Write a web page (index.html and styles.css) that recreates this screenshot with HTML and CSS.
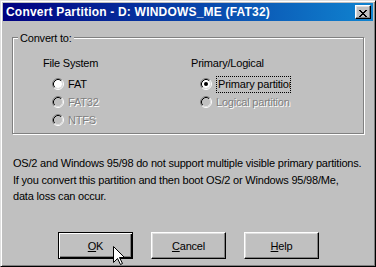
FILE: index.html
```html
<!DOCTYPE html>
<html>
<head>
<meta charset="utf-8">
<title>Convert Partition</title>
<link rel="stylesheet" href="styles.css">
</head>
<body>
<div class="window">
  <div class="titlebar">
    <span class="title">Convert Partition - D: WINDOWS_ME (FAT32)</span>
    <button class="close" aria-label="Close">
      <svg width="8" height="7" viewBox="0 0 8 7" shape-rendering="crispEdges">
        <rect x="0" y="0" width="2" height="1"/><rect x="6" y="0" width="2" height="1"/>
        <rect x="1" y="1" width="2" height="1"/><rect x="5" y="1" width="2" height="1"/>
        <rect x="2" y="2" width="4" height="1"/>
        <rect x="3" y="3" width="2" height="1"/>
        <rect x="2" y="4" width="4" height="1"/>
        <rect x="1" y="5" width="2" height="1"/><rect x="5" y="5" width="2" height="1"/>
        <rect x="0" y="6" width="2" height="1"/><rect x="6" y="6" width="2" height="1"/>
      </svg>
    </button>
  </div>
  <div class="content">
    <div class="group">
      <div class="legend">Convert to:</div>
      <div class="cols">
        <div class="col">
          <div class="heading">File System</div>
          <div class="radio">
            <svg class="rb" width="12" height="12" viewBox="0 0 12 12">
              <path d="M2.11 9.89A5.5 5.5 0 0 1 9.89 2.11" stroke="#808080" fill="none"/>
              <path d="M9.89 2.11A5.5 5.5 0 0 1 2.11 9.89" stroke="#fff" fill="none"/>
              <circle cx="6" cy="6" r="4" fill="#fff"/>
              <path d="M2.82 9.18A4.5 4.5 0 0 1 9.18 2.82" stroke="#000" fill="none"/>
              <path d="M9.18 2.82A4.5 4.5 0 0 1 2.82 9.18" stroke="#dfdfdf" fill="none"/>
            </svg>
            <span class="lbl">FAT</span>
          </div>
          <div class="radio">
            <svg class="rb" width="12" height="12" viewBox="0 0 12 12">
              <path d="M2.11 9.89A5.5 5.5 0 0 1 9.89 2.11" stroke="#808080" fill="none"/>
              <path d="M9.89 2.11A5.5 5.5 0 0 1 2.11 9.89" stroke="#fff" fill="none"/>
              <circle cx="6" cy="6" r="4" fill="#c0c0c0"/>
              <path d="M2.82 9.18A4.5 4.5 0 0 1 9.18 2.82" stroke="#000" fill="none"/>
              <path d="M9.18 2.82A4.5 4.5 0 0 1 2.82 9.18" stroke="#dfdfdf" fill="none"/>
            </svg>
            <span class="lbl disabled">FAT32</span>
          </div>
          <div class="radio">
            <svg class="rb" width="12" height="12" viewBox="0 0 12 12">
              <path d="M2.11 9.89A5.5 5.5 0 0 1 9.89 2.11" stroke="#808080" fill="none"/>
              <path d="M9.89 2.11A5.5 5.5 0 0 1 2.11 9.89" stroke="#fff" fill="none"/>
              <circle cx="6" cy="6" r="4" fill="#c0c0c0"/>
              <path d="M2.82 9.18A4.5 4.5 0 0 1 9.18 2.82" stroke="#000" fill="none"/>
              <path d="M9.18 2.82A4.5 4.5 0 0 1 2.82 9.18" stroke="#dfdfdf" fill="none"/>
            </svg>
            <span class="lbl disabled">NTFS</span>
          </div>
        </div>
        <div class="col">
          <div class="heading">Primary/Logical</div>
          <div class="radio">
            <svg class="rb" width="12" height="12" viewBox="0 0 12 12">
              <path d="M2.11 9.89A5.5 5.5 0 0 1 9.89 2.11" stroke="#808080" fill="none"/>
              <path d="M9.89 2.11A5.5 5.5 0 0 1 2.11 9.89" stroke="#fff" fill="none"/>
              <circle cx="6" cy="6" r="4" fill="#fff"/>
              <path d="M2.82 9.18A4.5 4.5 0 0 1 9.18 2.82" stroke="#000" fill="none"/>
              <path d="M9.18 2.82A4.5 4.5 0 0 1 2.82 9.18" stroke="#dfdfdf" fill="none"/>
              <circle cx="6" cy="6" r="2" fill="#000"/>
            </svg>
            <span class="lbl focus">Primary partition</span>
          </div>
          <div class="radio">
            <svg class="rb" width="12" height="12" viewBox="0 0 12 12">
              <path d="M2.11 9.89A5.5 5.5 0 0 1 9.89 2.11" stroke="#808080" fill="none"/>
              <path d="M9.89 2.11A5.5 5.5 0 0 1 2.11 9.89" stroke="#fff" fill="none"/>
              <circle cx="6" cy="6" r="4" fill="#c0c0c0"/>
              <path d="M2.82 9.18A4.5 4.5 0 0 1 9.18 2.82" stroke="#000" fill="none"/>
              <path d="M9.18 2.82A4.5 4.5 0 0 1 2.82 9.18" stroke="#dfdfdf" fill="none"/>
            </svg>
            <span class="lbl disabled">Logical partition</span>
          </div>
        </div>
      </div>
    </div>
    <p class="note">OS/2 and Windows 95/98 do not support multiple visible primary partitions.<br>If you convert this partition and then boot OS/2 or Windows 95/98/Me,<br>data loss can occur.</p>
    <div class="buttons">
      <button class="btn default"><u>O</u>K</button>
      <button class="btn"><u>C</u>ancel</button>
      <button class="btn"><u>H</u>elp</button>
    </div>
  </div>
  <svg class="cursor" width="13" height="20" viewBox="0 0 13 20">
    <path d="M0.5 0.5V16.5L4.5 12.5L7.5 18.5L9.5 17.5L6.5 11.5H11.5Z" fill="#fff" stroke="#000" stroke-linejoin="miter"/>
  </svg>
</div>
</body>
</html>
```

FILE: styles.css
```css
html, body {
  margin: 0;
  padding: 0;
}

body {
  background: #c0c0c0;
  font-family: "Liberation Sans", Arial, sans-serif;
  font-size: 11px;
  letter-spacing: -0.2px;
  color: #000;
}

.window {
  position: relative;
  box-sizing: border-box;
  width: 376px;
  height: 267px;
  border: 1px solid;
  border-color: #dfdfdf #000 #000 #dfdfdf;
  box-shadow: inset 1px 1px #fff, inset -1px -1px #808080;
  padding: 2px;
  display: flex;
  flex-direction: column;
  background: #c0c0c0;
  overflow: hidden;
}

.titlebar {
  height: 18px;
  flex: none;
  background: linear-gradient(90deg, #000080, #1084d0);
  display: flex;
  align-items: center;
  justify-content: space-between;
  padding: 0 2px 0 3px;
}

.title {
  color: #fff;
  font-family: "Liberation Sans", Arial, sans-serif;
  font-weight: bold;
  font-size: 12px;
  letter-spacing: 0.2px;
  white-space: nowrap;
}

.close {
  width: 16px;
  height: 14px;
  box-sizing: border-box;
  padding: 0;
  margin: 0;
  border: 1px solid;
  border-color: #fff #000 #000 #fff;
  box-shadow: inset -1px -1px #808080, inset 1px 1px #dfdfdf;
  background: #c0c0c0;
  display: block;
}

.close svg {
  display: block;
  margin: 2px 0 0 3px;
  fill: #000;
}

.content {
  flex: 1;
  display: flex;
  flex-direction: column;
  padding: 16px 9px 5px;
}

.group {
  border: 1px solid #808080;
  box-shadow: inset 1px 1px #fff, 1px 1px #fff;
  padding: 0 0 4px 0;
}

.legend {
  width: fit-content;
  margin: -8px 0 0 5px;
  padding: 0 2px;
  background: #c0c0c0;
  line-height: 16px;
}

.cols {
  display: grid;
  grid-template-columns: 148px auto;
  margin-top: 9px;
  padding-left: 30px;
}

.heading {
  line-height: 16px;
  margin-bottom: 4px;
}

.radio {
  display: flex;
  align-items: center;
  height: 18px;
  padding-left: 9px;
  gap: 4px;
  line-height: 16px;
}

.rb {
  display: block;
  flex: none;
}

.lbl {
  white-space: nowrap;
}

.disabled {
  color: #808080;
  text-shadow: 1px 1px 0 #fff;
}

.focus {
  box-sizing: border-box;
  width: 75px;
  height: 17px;
  border: 1px dotted #000;
  padding-left: 1px;
  overflow: hidden;
  line-height: 15px;
}

.note {
  margin: 21px 0 0;
  line-height: 16.5px;
  white-space: nowrap;
  padding-left: 1px;
}

.buttons {
  margin-top: auto;
  display: flex;
  gap: 18px;
  padding-left: 46px;
}

.btn {
  width: 75px;
  height: 27px;
  box-sizing: border-box;
  margin: 0;
  padding: 0;
  font: inherit;
  letter-spacing: inherit;
  color: #000;
  background: #c0c0c0;
  border: 1px solid;
  border-color: #fff #000 #000 #fff;
  box-shadow: inset -1px -1px #808080, inset 1px 1px #dfdfdf;
}

.btn.default {
  border-color: #000;
  box-shadow: inset 1px 1px #fff, inset -1px -1px #000, inset -2px -2px #808080;
}

.btn u {
  text-decoration: underline;
  text-underline-offset: 1px;
}

.cursor {
  position: absolute;
  left: 112px;
  top: 245px;
  display: block;
}
```
